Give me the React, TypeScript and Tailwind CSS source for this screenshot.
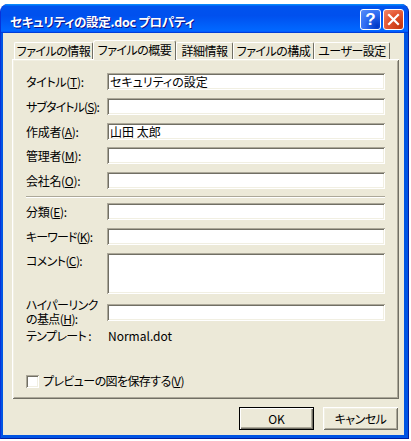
import React from "react";

const FONT = "font-['Noto_Sans_CJK_JP','Noto_Sans',sans-serif] [font-feature-settings:'palt']";
const SUNKEN = "bg-white shadow-[inset_1px_1px_#ACA899,inset_-1px_-1px_#fff,inset_2px_2px_#716F64,inset_-2px_-2px_#F1EFE2]";
const RAISED = "shadow-[inset_1px_1px_#fff,inset_-1px_-1px_#716F64,inset_2px_2px_#F1EFE2,inset_-2px_-2px_#ACA899]";

function U({ c }: { c: string }) {
  return <span className="underline underline-offset-[1px]">{c}</span>;
}

function Row({ label, value, cls = "", tight }: { label: React.ReactNode; value?: string; cls?: string; tight?: boolean }) {
  return (
    <div className={`flex items-center ${cls}`}>
      <div className={`w-[81px] shrink-0 whitespace-nowrap leading-[14px] ${tight ? "tracking-[-0.9px]" : "tracking-[-0.3px]"}`}>{label}</div>
      <div className={`w-[278px] h-[17px] shrink-0 pl-[3px] flex items-center leading-[14px] whitespace-nowrap ${SUNKEN}`}>{value}</div>
    </div>
  );
}

function Tab({ label, active, w }: { label: string; active?: boolean; w: string }) {
  if (active) {
    return (
      <div className={`relative z-10 ${w} shrink-0 h-[20px] bg-[#ECE9D8] border-t border-l border-white border-r border-r-[#716F64] rounded-t-[3px] flex items-start justify-center pt-[2px] leading-[14px] whitespace-nowrap tracking-[-0.5px]`}>
        {label}
      </div>
    );
  }
  return (
    <div className={`${w} shrink-0 h-[17px] mt-[2px] bg-[#ECE9D8] border-t border-l border-white border-r border-r-[#716F64] rounded-t-[2px] flex items-center justify-center leading-[14px] whitespace-nowrap tracking-[-0.5px]`}>
      {label}
    </div>
  );
}

export default function App() {
  return (
    <div className={`w-[411px] h-[441px] bg-white pt-[4px] text-[12px] text-black ${FONT}`}>
      <div className="w-[409px] h-[435px] rounded-t-[8px] bg-[#0054E3] border-l border-l-[#0831D9] border-r border-r-[#001EA0] border-b border-b-[#001EA0] flex flex-col overflow-hidden">
        {/* title bar */}
        <div className="h-[29px] shrink-0 flex items-start bg-[linear-gradient(180deg,#0997ff,#0053ee_8%,#0050ee_40%,#06f_88%,#06f_93%,#005bff_95%,#003dd7_96%,#003dd7)] pl-[9px] pr-[4px]">
          <span className="mt-[11px] font-bold text-white text-[12.5px] leading-[14px] tracking-[-0.3px] whitespace-nowrap [text-shadow:1px_1px_#0f1089]">
            セキュリティの設定.doc プロパティ
          </span>
          <div className="ml-auto mt-[5px] flex gap-[2px]">
            <div className="w-[21px] h-[21px] rounded-[3px] border border-white bg-[radial-gradient(circle_at_85%_85%,#0037c6,#2f6df3_55%,#5b8ff8)] flex items-center justify-center">
              <span className="text-white font-bold text-[17px] leading-none font-['Liberation_Sans',sans-serif] -mt-[1px]">?</span>
            </div>
            <div className="w-[21px] h-[21px] rounded-[3px] border border-white bg-[radial-gradient(circle_at_85%_85%,#c4360e,#e4542f_55%,#f08a6c)] flex items-center justify-center">
              <svg width="13" height="13" viewBox="0 0 13 13">
                <path d="M2 2 L11 11 M11 2 L2 11" stroke="#fff" strokeWidth="2.2" strokeLinecap="square" />
              </svg>
            </div>
          </div>
        </div>

        {/* body */}
        <div className="flex-1 ml-[2px] mr-[4px] mb-[3px] bg-[#ECE9D8] pt-[7px] flex flex-col">
          <div className="h-[19px] ml-[11px] flex items-start">
            <Tab label="ファイルの情報" w="w-[79px]" />
            <Tab label="ファイルの概要" w="w-[83px]" active />
            <Tab label="詳細情報" w="w-[57px]" />
            <Tab label="ファイルの構成" w="w-[81px]" />
            <Tab label="ユーザー設定" w="w-[76px]" />
          </div>

          <div className={`ml-[9px] w-[387px] h-[340px] pt-[14px] pl-[14px] flex flex-col ${RAISED}`}>
            <Row label={<>タイトル(<U c="T" />):</>} value="セキュリティの設定" />
            <Row cls="mt-[8px]" tight label={<>サブタイトル(<U c="S" />):</>} />
            <Row cls="mt-[8px]" label={<>作成者(<U c="A" />):</>} value="山田 太郎" />
            <Row cls="mt-[7px]" label={<>管理者(<U c="M" />):</>} />
            <Row cls="mt-[8px]" label={<>会社名(<U c="O" />):</>} />

            <div className="mt-[7px] w-[359px] h-[2px] border-t border-t-[#ACA899] border-b border-b-white" />

            <Row cls="mt-[5px]" label={<>分類(<U c="E" />):</>} />
            <Row cls="mt-[8px]" tight label={<>キーワード(<U c="K" />):</>} />
            <div className="mt-[8px] flex items-start">
              <div className="w-[81px] shrink-0 pt-[1px] leading-[14px] whitespace-nowrap tracking-[-0.6px]">
                コメント(<U c="C" />):
              </div>
              <div className={`w-[278px] h-[41px] shrink-0 ${SUNKEN}`} />
            </div>
            <div className="mt-[4px] flex items-center">
              <div className="w-[81px] shrink-0 leading-[14px] whitespace-nowrap tracking-[-0.6px]">
                ハイパーリンク
                <br />
                の基点(<U c="H" />):
              </div>
              <div className={`w-[278px] h-[17px] shrink-0 ${SUNKEN}`} />
            </div>
            <div className="mt-[3px] flex items-center leading-[14px] whitespace-nowrap">
              <div className="w-[81px] shrink-0 tracking-[-0.6px]">テンプレート :</div>
              <div className="pl-[1px]">Normal.dot</div>
            </div>

            <div className="mt-[31px] flex items-center leading-[14px] whitespace-nowrap">
              <div className={`w-[13px] h-[13px] shrink-0 ${SUNKEN}`} />
              <span className="ml-[4px] tracking-[-0.6px]">
                プレビューの図を保存する(<U c="V" />)
              </span>
            </div>
          </div>

          <div className="mt-[8px] mr-[6px] flex justify-end gap-[9px]">
            <div className="w-[75px] h-[23px] border border-black bg-[#ECE9D8] flex items-center justify-center leading-[14px] shadow-[inset_1px_1px_#fff,inset_-1px_-1px_#716F64,inset_-2px_-2px_#ACA899]">
              OK
            </div>
            <div className={`w-[75px] h-[23px] bg-[#ECE9D8] flex items-center justify-center leading-[14px] tracking-[-0.5px] ${RAISED}`}>
              キャンセル
            </div>
          </div>
        </div>
      </div>
    </div>
  );
}
